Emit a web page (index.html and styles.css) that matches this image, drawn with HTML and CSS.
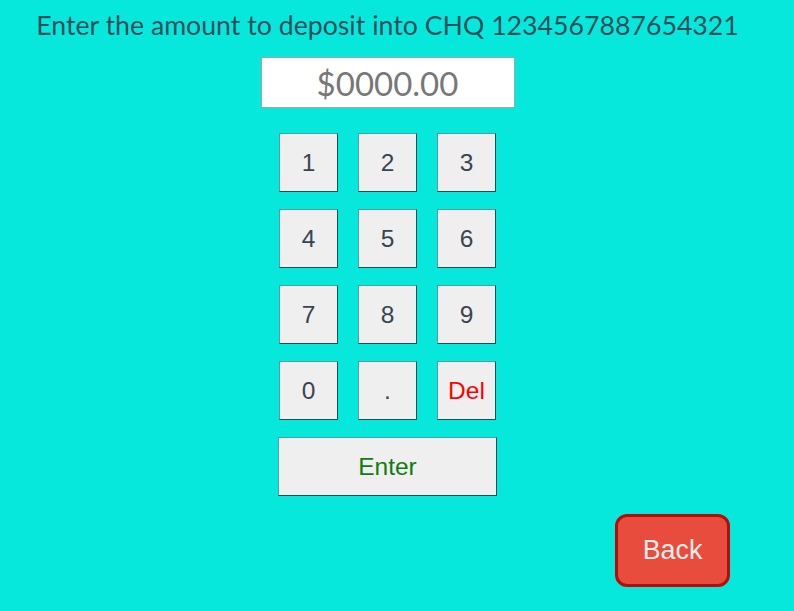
FILE: index.html
```html
<!DOCTYPE html>
<html>
<head>
<meta charset="utf-8">
<link rel="stylesheet" href="styles.css">
</head>
<body>
<main class="screen">
  <h1 class="title">Enter the amount to deposit into CHQ 1234567887654321</h1>
  <div class="amount">$0000.00</div>
  <div class="keypad">
    <button class="key">1</button>
    <button class="key">2</button>
    <button class="key">3</button>
    <button class="key">4</button>
    <button class="key">5</button>
    <button class="key">6</button>
    <button class="key">7</button>
    <button class="key">8</button>
    <button class="key">9</button>
    <button class="key">0</button>
    <button class="key">.</button>
    <button class="key key-del">Del</button>
    <button class="key key-enter">Enter</button>
  </div>
  <div class="footer">
    <button class="back">Back</button>
  </div>
</main>
</body>
</html>
```

FILE: styles.css
```css
html, body {
  margin: 0;
  padding: 0;
  background: #07e8dc;
  height: 100%;
}
.screen {
  display: flex;
  flex-direction: column;
  align-items: center;
  padding-right: 19px;
  font-family: "Liberation Sans", Arial, sans-serif;
}
.title {
  margin: 8px 0 0 0;
  font-family: Lato, "Liberation Sans", sans-serif;
  font-weight: 400;
  font-size: 26.7px;
  line-height: 34px;
  color: #29505a;
  white-space: nowrap;
}
.amount {
  margin-top: 15px;
  width: 252px;
  height: 49px;
  background: #fff;
  border: 1px solid #9aa;
  display: flex;
  align-items: center;
  justify-content: center;
  font-family: Lato, "Liberation Sans", sans-serif;
  font-size: 33px;
  color: #777;
}
.keypad {
  margin-top: 25px;
  display: grid;
  grid-template-columns: repeat(3, 59px);
  grid-auto-rows: 59px;
  column-gap: 20px;
  row-gap: 17px;
}
.key {
  box-sizing: border-box;
  margin: 0;
  padding: 0;
  background: #efefef;
  border: 1px solid;
  border-color: #4fa0a3 #1f4f52 #1f4f52 #4fa0a3;
  font-family: "Liberation Sans", Arial, sans-serif;
  font-size: 24.5px;
  color: #3a4450;
}
.key-del {
  color: #ff0000;
}
.key-enter {
  grid-column: 1 / span 3;
  margin: 0 -1px;
  color: #137a13;
}
.footer {
  align-self: stretch;
  display: flex;
  justify-content: flex-end;
  padding-right: 45px;
  margin-top: 18px;
}
.back {
  box-sizing: border-box;
  width: 115px;
  height: 73px;
  background: #e74c3c;
  border: 3px solid #b80c0c;
  border-radius: 12px;
  color: #fdeeee;
  font-family: "Liberation Sans", Arial, sans-serif;
  font-size: 26.8px;
  padding: 0;
}
```
